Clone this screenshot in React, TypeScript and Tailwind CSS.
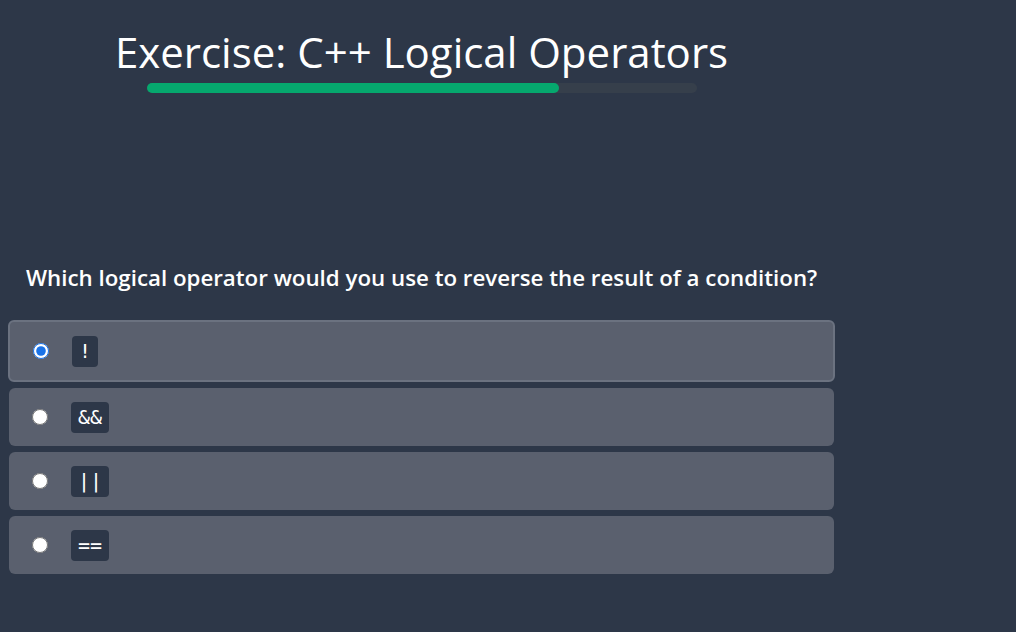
import React from 'react'

const options = ['!', '&&', '||', '==']

export default function App() {
  const selected = 0
  return (
    <div className="min-h-screen w-full bg-[#2d3748] text-white" style={{ fontFamily: '"Open Sans", "Noto Sans", sans-serif' }}>
      <div className="w-[843px] px-2">
        <div className="flex flex-col items-center pt-[25px]">
          <h1 className="text-[42px] leading-[54px] font-normal">Exercise: C++ Logical Operators</h1>
          <div className="mt-[4px] h-[10px] w-[550px] rounded-full bg-[#363f4b]">
            <div className="h-full w-[75%] rounded-full bg-[#06a86e]" />
          </div>
        </div>
        <p className="mt-[170px] pl-[18px] text-[22.3px] font-semibold leading-[30px]">
          Which logical operator would you use to reverse the result of a condition?
        </p>
        <div className="mt-[27px] flex flex-col gap-[6px]">
          {options.map((o, i) => (
            <label
              key={o}
              className={
                i === selected
                  ? 'flex h-[62px] items-center rounded-md border-2 border-[#6b7280] bg-[#5a606e] px-[23px]'
                  : 'mx-px flex h-[58px] items-center rounded-md bg-[#5a606e] px-[23px]'
              }
            >
              <input type="radio" name="op" defaultChecked={i === selected} className="h-[16px] w-[16px] accent-[#1a73e8]" />
              <code className="ml-[23px] flex h-[31px] items-center justify-center rounded-sm bg-[#2d3748] px-[7px] font-['DejaVu_Sans_Mono',monospace] text-[20px]">{o}</code>
            </label>
          ))}
        </div>
      </div>
    </div>
  )
}
